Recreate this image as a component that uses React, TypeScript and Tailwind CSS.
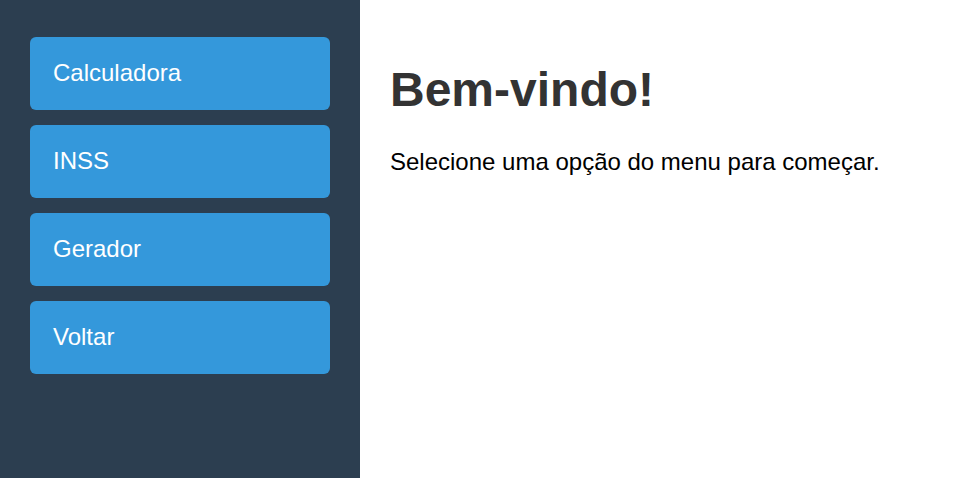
import React from "react";

const menu = ["Calculadora", "INSS", "Gerador", "Voltar"];

const App: React.FC = () => {
  return (
    <div className="flex min-h-screen bg-white font-['Liberation_Sans',Arial,sans-serif]">
      {/* Sidebar */}
      <aside className="w-[360px] shrink-0 bg-[#2c3e50] px-[30px] pt-[37px] flex flex-col gap-[15px]">
        {menu.map((item) => (
          <button
            key={item}
            className="h-[73px] w-full rounded-[6px] bg-[#3498db] px-[23px] pb-[2px] text-left text-[24px] leading-[28px] text-white"
          >
            {item}
          </button>
        ))}
      </aside>

      {/* Content */}
      <main className="flex-1 p-[30px]">
        <h1 className="mt-[32px] mb-[31px] text-[48px] font-bold leading-[55px] text-[#333]">Bem-vindo!</h1>
        <p className="text-[24px] leading-[28px] text-black">Selecione uma opção do menu para começar.</p>
      </main>
    </div>
  );
};

export default App;
